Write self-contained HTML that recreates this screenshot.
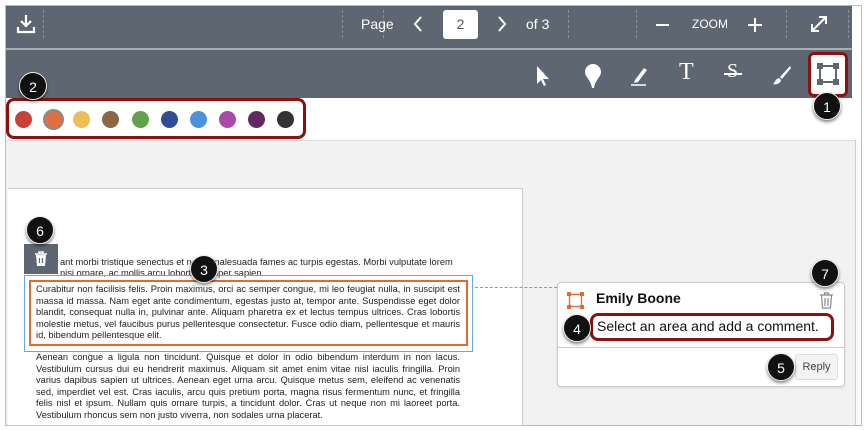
<!DOCTYPE html>
<html><head><meta charset="utf-8"><style>
*{box-sizing:border-box;margin:0;padding:0}
body{width:866px;height:430px;background:#fff;position:relative;overflow:hidden;font-family:"Liberation Sans",Arial,sans-serif}
.a{position:absolute}
.badge{position:absolute;width:28px;height:28px;border-radius:50%;background:#111;color:#fff;font-size:14px;text-align:center;line-height:28px;box-shadow:0 2px 3px rgba(0,0,0,.5);border:1px solid #eee}
.dot{position:absolute;top:111px;width:17px;height:17px;border-radius:50%}
.doc{font-size:9.3px;line-height:11.5px;color:#222;text-align:justify}
.sep{position:absolute;top:10px;height:28px;border-left:1px dashed #8a929b}
</style></head><body>
<div class="a" style="left:5px;top:5px;width:857px;height:421px;border:1px solid #bbb"></div>
<!-- top toolbar -->
<div class="a" style="left:6px;top:6px;width:846px;height:42px;background:#5d6671"></div>
<div class="a" style="left:6px;top:48px;width:846px;height:2px;background:#a7adb3"></div>
<div class="a" style="left:6px;top:50px;width:846px;height:48px;background:#5d6671"></div>
<div class="sep" style="left:43px"></div>
<div class="sep" style="left:342px"></div>
<div class="sep" style="left:383px"></div>
<div class="sep" style="left:568px"></div>
<div class="sep" style="left:636px"></div>
<div class="sep" style="left:786px"></div>
<div class="sep" style="left:848px"></div>
<svg class="a" style="left:12px;top:12px" width="28" height="26" viewBox="0 0 28 26" fill="none" stroke="#fff" stroke-width="2.2"><path d="M14 3v11M9 9l5 5 5-5M6 15v5h16v-5"/></svg>
<div class="a" style="left:361px;top:16px;color:#fff;font-size:14px">Page</div>
<svg class="a" style="left:411px;top:14px" width="14" height="20" viewBox="0 0 14 20" fill="none" stroke="#fff" stroke-width="2"><path d="M10 3L4 10l6 7"/></svg>
<div class="a" style="left:443px;top:10px;width:35px;height:29px;background:#fff;border-radius:3px;color:#555;font-size:14px;text-align:center;line-height:29px">2</div>
<svg class="a" style="left:495px;top:14px" width="14" height="20" viewBox="0 0 14 20" fill="none" stroke="#fff" stroke-width="2"><path d="M4 3l6 7-6 7"/></svg>
<div class="a" style="left:526px;top:16px;color:#fff;font-size:14px">of 3</div>
<div class="a" style="left:656px;top:24px;width:13px;height:2px;background:#fff"></div>
<div class="a" style="left:692px;top:17px;color:#fff;font-size:12px">ZOOM</div>
<div class="a" style="left:748px;top:24px;width:14px;height:2px;background:#fff"></div>
<div class="a" style="left:754px;top:18px;width:2px;height:14px;background:#fff"></div>
<svg class="a" style="left:808px;top:13px" width="22" height="22" viewBox="0 0 22 22" fill="none" stroke="#fff" stroke-width="2"><path d="M4 18L18 4M11 4h7v7M4 11v7h7"/></svg>
<!-- tools -->
<svg class="a" style="left:533px;top:64px" width="18" height="24" viewBox="0 0 18 24"><path d="M4 2v18l4-4 3 6 2-1-3-6h6z" fill="#fff"/></svg>
<svg class="a" style="left:582px;top:62px" width="22" height="28" viewBox="0 0 22 28"><path d="M11 2a8 8 0 0 1 8 8c0 5-6 8-7 16h-2C9 18 3 15 3 10a8 8 0 0 1 8-8z" fill="#fff"/></svg>
<svg class="a" style="left:628px;top:64px" width="22" height="24" viewBox="0 0 22 24"><path d="M7 16l9-12 3 2-9 12-4 1z" fill="#fff"/><path d="M3 21h15" stroke="#fff" stroke-width="1.5"/></svg>
<div class="a" style="left:679px;top:59px;color:#fff;font-size:24px;font-family:'Liberation Serif',serif">T</div>
<div class="a" style="left:727px;top:60px;color:#fff;font-size:20px;font-family:'Liberation Serif',serif">S</div>
<div class="a" style="left:724px;top:73px;width:18px;height:2px;background:#fff"></div>
<svg class="a" style="left:771px;top:64px" width="22" height="22" viewBox="0 0 22 22"><path d="M19 2L9 13l2 2L20 4z M8 14l2 2c-1 4-5 5-8 4 2-1 2-5 6-6z" fill="#fff"/></svg>
<div class="a" style="left:808px;top:52px;width:40px;height:45px;background:#fff;border:3px solid #8b1111;border-radius:6px"></div>
<svg class="a" style="left:816px;top:62px" width="24" height="24" viewBox="0 0 24 24"><rect x="4" y="4" width="16" height="16" fill="none" stroke="#5d6671" stroke-width="2"/><g fill="#5d6671"><rect x="1" y="1" width="6" height="6"/><rect x="17" y="1" width="6" height="6"/><rect x="1" y="17" width="6" height="6"/><rect x="17" y="17" width="6" height="6"/></g></svg>
<!-- colors -->
<div class="a" style="left:6px;top:98px;width:300px;height:41px;border:3px solid #8b1111;border-radius:8px"></div>
<div class="dot" style="left:15px;background:#c9403a"></div>
<div class="dot" style="left:43px;top:109px;width:21px;height:21px;background:#e07040;border:2px solid #888"></div>
<div class="dot" style="left:73px;background:#eebd55"></div>
<div class="dot" style="left:102px;background:#8a6745"></div>
<div class="dot" style="left:132px;background:#62a24a"></div>
<div class="dot" style="left:161px;background:#2f4d92"></div>
<div class="dot" style="left:190px;background:#4b92dc"></div>
<div class="dot" style="left:219px;background:#aa4aa8"></div>
<div class="dot" style="left:248px;background:#632a62"></div>
<div class="dot" style="left:277px;background:#333"></div>
<!-- gray area -->
<div class="a" style="left:6px;top:140px;width:849px;height:285px;background:#f2f2f2;border-top:1px solid #ddd"></div>
<div class="a" style="left:855px;top:140px;width:6px;height:285px;background:#fafafa;border-left:1px solid #ccc"></div>
<div class="a" style="left:8px;top:188px;width:515px;height:238px;background:#fff;border:1px solid #ccc;border-left:none"></div>
<div class="a" style="left:24px;top:244px;width:34px;height:30px;background:#5d6671"></div>
<svg class="a" style="left:34px;top:251px" width="14" height="16" viewBox="0 0 14 16"><path d="M1 3h12M5 3V1h4v2" stroke="#fff" stroke-width="1.5" fill="none"/><path d="M2 4h10l-1 11H3z" fill="#fff"/><path d="M5.5 7v5M8.5 7v5" stroke="#5d6671" stroke-width="1.2"/></svg>
<div class="a doc" style="left:60px;top:257px;width:398px">ant morbi tristique senectus et netus malesuada fames ac turpis egestas. Morbi vulputate lorem</div>
<div class="a doc" style="left:60px;top:268px;width:220px">nisi ornare, ac mollis arcu lobortis semper sapien.</div>
<div class="a" style="left:24px;top:275px;width:449px;height:77px;border:1px solid #6aa6e0"></div>
<div class="a" style="left:29px;top:280px;width:439px;height:66px;border:2px solid #e06a30"></div>
<div class="a doc" style="left:36px;top:284px;width:424px">Curabitur non facilisis felis. Proin maximus, orci ac semper congue, mi leo feugiat nulla, in suscipit est massa id massa. Nam eget ante condimentum, egestas justo at, tempor ante. Suspendisse eget dolor blandit, consequat nulla in, pulvinar ante. Aliquam pharetra ex et lectus tempus ultrices. Cras lobortis molestie metus, vel faucibus purus pellentesque consectetur. Fusce odio diam, pellentesque et mauris id, bibendum pellentesque elit.</div>
<div class="a doc" style="left:36px;top:352px;width:424px">Aenean congue a ligula non tincidunt. Quisque et dolor in odio bibendum interdum in non lacus. Vestibulum cursus dui eu hendrerit maximus. Aliquam sit amet enim vitae nisl iaculis fringilla. Proin varius dapibus sapien ut ultrices. Aenean eget urna arcu. Quisque metus sem, eleifend ac venenatis sed, imperdiet vel est. Cras iaculis, arcu quis pretium porta, magna risus fermentum nunc, et fringilla felis nisl et ipsum. Nullam quis ornare turpis, a tincidunt dolor. Cras ut neque non mi laoreet porta. Vestibulum rhoncus sem non justo viverra, non sodales urna placerat.</div>
<div class="a" style="left:475px;top:287px;width:82px;border-top:1px dashed #999"></div>
<!-- comment card -->
<div class="a" style="left:557px;top:282px;width:288px;height:105px;background:#fff;border:1px solid #ccc;border-radius:4px;box-shadow:0 1px 2px rgba(0,0,0,.1)"></div>
<svg class="a" style="left:567px;top:292px" width="17" height="17" viewBox="0 0 17 17"><rect x="2.5" y="2.5" width="12" height="12" fill="none" stroke="#e06a30" stroke-width="1.3"/><g fill="#e06a30"><rect x="0" y="0" width="4" height="4"/><rect x="13" y="0" width="4" height="4"/><rect x="0" y="13" width="4" height="4"/><rect x="13" y="13" width="4" height="4"/></g></svg>
<div class="a" style="left:596px;top:290px;font-size:14px;font-weight:bold;color:#111">Emily Boone</div>
<svg class="a" style="left:819px;top:292px" width="15" height="17" viewBox="0 0 15 17" fill="none" stroke="#888" stroke-width="1.2"><path d="M1 3h13M5.5 3V1h4v2M2.5 3l1 13h8l1-13M6 6v8M9 6v8"/></svg>
<div class="a" style="left:590px;top:313px;width:244px;height:28px;border:3px solid #8b1111;border-radius:8px"></div>
<div class="a" style="left:597px;top:318px;font-size:14px;color:#111">Select an area and add a comment.</div>
<div class="a" style="left:558px;top:347px;width:286px;border-top:1px solid #ccc"></div>
<div class="a" style="left:795px;top:354px;width:43px;height:26px;background:#f3f3f3;border:1px solid #ddd;border-radius:3px;font-size:11px;color:#444;text-align:center;line-height:24px">Reply</div>
<!-- badges -->
<div class="badge" style="left:813px;top:92px">1</div>
<div class="badge" style="left:19px;top:72px">2</div>
<div class="badge" style="left:190px;top:255px">3</div>
<div class="badge" style="left:563px;top:314px">4</div>
<div class="badge" style="left:767px;top:353px">5</div>
<div class="badge" style="left:26px;top:216px">6</div>
<div class="badge" style="left:811px;top:259px">7</div>
</body></html>
